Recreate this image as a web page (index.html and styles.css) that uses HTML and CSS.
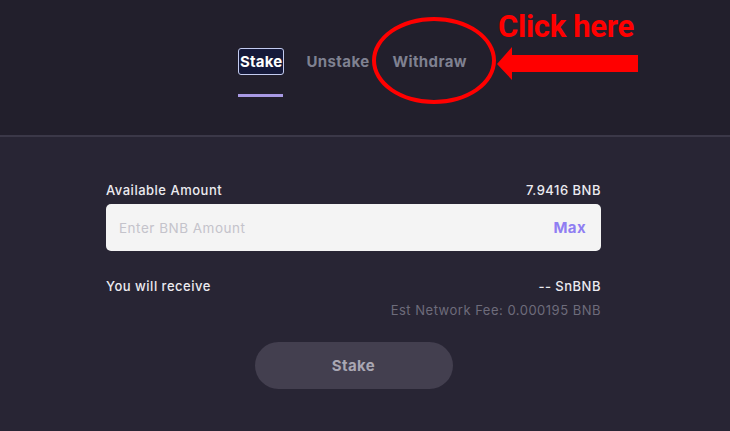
FILE: index.html
```html
<!DOCTYPE html>
<html>
<head>
<meta charset="utf-8">
<link rel="stylesheet" href="styles.css">
</head>
<body>
<div class="page">
  <header class="header">
    <nav class="tabs">
      <div class="tab active"><span class="tab-label focus">Stake</span><span class="underline"></span></div>
      <div class="tab"><span class="tab-label">Unstake</span></div>
      <div class="tab"><span class="tab-label">Withdraw</span></div>
    </nav>
    <div class="annot-ellipse"></div>
    <div class="annot-text">Click here</div>
    <svg class="annot-arrow" width="142" height="34" viewBox="0 0 142 34">
      <polygon points="0,17 15,0 15,8 141,8 141,25 15,25 15,33" fill="#ff0000"/>
    </svg>
  </header>
  <main class="content">
    <div class="form">
      <div class="row label-row">
        <span class="label">Available Amount</span>
        <span class="value">7.9416 BNB</span>
      </div>
      <div class="input">
        <span class="placeholder">Enter BNB Amount</span>
        <span class="max">Max</span>
      </div>
      <div class="row receive-row">
        <span class="label">You will receive</span>
        <span class="value">-- SnBNB</span>
      </div>
      <div class="row fee-row">
        <span class="fee">Est Network Fee: 0.000195 BNB</span>
      </div>
      <div class="btn-wrap">
        <button class="stake-btn">Stake</button>
      </div>
    </div>
  </main>
</div>
</body>
</html>
```

FILE: styles.css
```css
* { box-sizing: border-box; }
html, body { margin: 0; padding: 0; }
body {
  width: 730px;
  height: 431px;
  overflow: hidden;
  background: #282534;
  font-family: Inter, "Liberation Sans", sans-serif;
}
.page { display: flex; flex-direction: column; height: 431px; }
.header {
  position: relative;
  height: 137px;
  background: #221f2c;
  border-bottom: 2px solid #3b3848;
  flex-shrink: 0;
}
.tabs {
  display: flex;
  gap: 21px;
  padding-left: 238px;
  padding-top: 48px;
}
.tab { display: flex; flex-direction: column; align-items: stretch; }
.tab-label {
  font-size: 15px;
  font-weight: 700;
  color: #7f8191;
  line-height: 27px;
  padding: 0 1px;
  letter-spacing: 0.4px;
}
.tab-label.focus {
  color: #ffffff;
  background: #15193a;
  border: 1px solid #c3cbf0;
  border-radius: 3px;
  padding: 0 1px;
  line-height: 25px;
  letter-spacing: 0.2px;
}
.underline {
  display: block;
  height: 3px;
  background: #a899e4;
  margin-top: 19px;
  width: 45px;
}
.annot-ellipse {
  position: absolute;
  left: 372px;
  top: 17px;
  width: 124px;
  height: 87px;
  border: 4px solid #ff0000;
  border-radius: 50%;
}
.annot-text {
  position: absolute;
  left: 498px;
  top: 11px;
  font-family: Roboto, "Liberation Sans", sans-serif;
  font-weight: 700;
  font-size: 31px;
  line-height: 31px;
  color: #ff0000;
  letter-spacing: -0.3px;
}
.annot-arrow {
  position: absolute;
  left: 497px;
  top: 47px;
}
.content { flex: 1; display: flex; padding-left: 106px; }
.form { width: 495px; padding-top: 44px; display: flex; flex-direction: column; }
.row { display: flex; justify-content: space-between; align-items: center; }
.label, .value {
  font-size: 13px;
  font-weight: 500;
  color: #ecebf0;
  letter-spacing: 0.5px;
}
.label-row { height: 18px; }
.input {
  margin-top: 5px;
  height: 47px;
  background: #f4f4f4;
  border-radius: 5px;
  display: flex;
  justify-content: space-between;
  align-items: center;
  padding: 0 15px 0 13px;
}
.placeholder { font-size: 13.5px; color: #c4c3cb; letter-spacing: 0.5px; }
.max { font-size: 15px; font-weight: 700; color: #8f7ef2; letter-spacing: 0.4px; }
.receive-row { margin-top: 25px; height: 20px; }
.fee-row { justify-content: flex-end; margin-top: 4px; height: 20px; }
.fee { font-size: 13px; color: #6e6c7b; letter-spacing: 0.5px; }
.btn-wrap { display: flex; justify-content: center; margin-top: 22px; }
.stake-btn {
  width: 198px;
  height: 47px;
  border: none;
  border-radius: 24px;
  background: #433f4f;
  color: #a9a7b3;
  font-family: Inter, "Liberation Sans", sans-serif;
  font-size: 15px;
  font-weight: 700;
  letter-spacing: 0.4px;
}
```
